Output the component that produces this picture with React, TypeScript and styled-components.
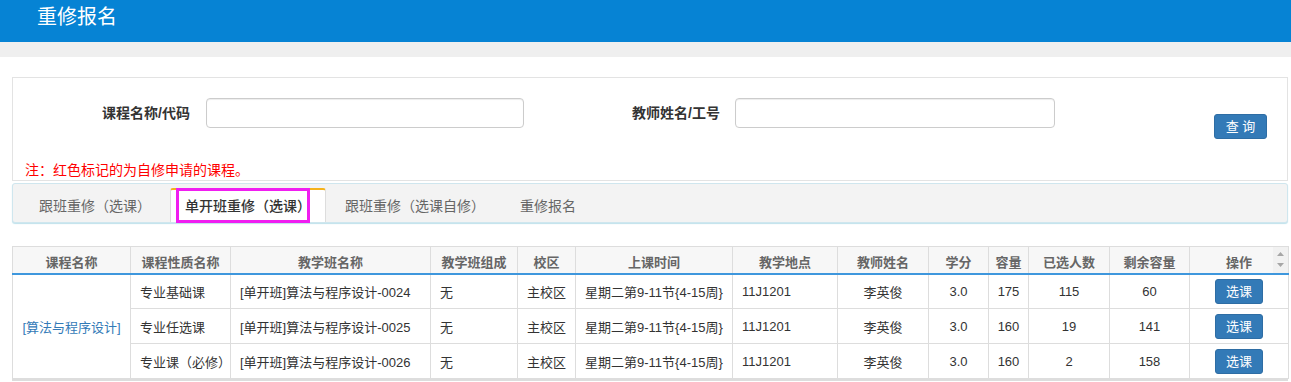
import React from "react";
import styled, { createGlobalStyle } from "styled-components";

const GlobalStyle = createGlobalStyle`
  html, body { margin: 0; padding: 0; background: #fff; }
  body {
    font-family: "Liberation Sans", "Noto Sans CJK SC", sans-serif;
    color: #333;
  }
  * { box-sizing: border-box; }
`;

const Page = styled.div`
  width: 1291px;
`;

const TopBar = styled.header`
  height: 42px;
  background: #0683d4;
  padding-left: 37px;
`;

const Title = styled.h1`
  margin: 0;
  font-size: 20px;
  font-weight: normal;
  color: #fff;
  line-height: 34px;
`;

const Strip = styled.div`
  height: 15px;
  background: #efefef;
`;

const Main = styled.main`
  padding: 20px 3px 0 12px;
`;

const SearchPanel = styled.section`
  height: 104px;
  border: 1px solid #e3e3e3;
  padding-top: 20px;
`;

const FormRow = styled.div`
  display: flex;
  align-items: flex-start;
`;

const FieldLabel = styled.label<{ $w: number; $gap?: number }>`
  width: ${(p) => p.$w}px;
  margin-left: ${(p) => p.$gap ?? 0}px;
  text-align: right;
  font-size: 14px;
  font-weight: bold;
  line-height: 30px;
  color: #333;
  margin-right: 15px;
`;

const TextInput = styled.input<{ $w: number }>`
  width: ${(p) => p.$w}px;
  height: 30px;
  border: 1px solid #ccc;
  border-radius: 4px;
  box-shadow: inset 0 1px 1px rgba(0, 0, 0, 0.075);
  padding: 4px 8px;
  font-size: 13px;
  outline: none;
`;

const QueryButton = styled.button`
  margin: 16px 0 0 159px;
  width: 53px;
  height: 25px;
  padding: 0;
  background: #337ab7;
  border: 1px solid #2e6da4;
  border-radius: 3px;
  color: #fff;
  font-family: "Liberation Sans", "Noto Sans CJK SC", sans-serif;
  font-size: 13px;
  line-height: 23px;
  white-space: pre;
`;

const Note = styled.p`
  margin: 21px 0 0 12px;
  font-size: 14px;
  line-height: 20px;
  color: #ff0000;
`;

const TabBar = styled.nav`
  margin-top: 2px;
  height: 40px;
  border: 1px solid #cfe6ee;
  border-radius: 3px;
  background: #f3f3f3;
  box-shadow: 0 1px 1px #bfe2ec;
  display: flex;
  align-items: flex-end;
  padding-left: 10px;
`;

const Tab = styled.div<{ $active?: boolean }>`
  position: relative;
  height: 34px;
  line-height: 32px;
  font-size: 14px;
  margin-right: 3px;
  white-space: nowrap;
  color: ${(p) => (p.$active ? "#333" : "#666")};
  font-weight: ${(p) => (p.$active ? 500 : 400)};
  background: ${(p) => (p.$active ? "#fff" : "transparent")};
  border-top: 2px solid ${(p) => (p.$active ? "#f5b21a" : "transparent")};
  border-left: ${(p) => (p.$active ? "1px solid #ddd" : "0")};
  border-right: ${(p) => (p.$active ? "1px solid #ddd" : "0")};
  border-radius: 3px 3px 0 0;
  padding: ${(p) => (p.$active ? "0 14px" : "0 16px")};
`;

const Highlight = styled.span`
  position: absolute;
  left: 5px;
  top: -2px;
  width: 134px;
  height: 35px;
  border: 3px solid #f01ef0;
  pointer-events: none;
`;

const GridWrap = styled.div`
  position: relative;
  margin-top: 23px;
  width: 1276px;
  border-bottom: 2px solid #ddd;
`;

const Grid = styled.table`
  width: 1276px;
  table-layout: fixed;
  border-collapse: collapse;
  font-size: 13px;
`;

const Th = styled.th`
  height: 27px;
  padding: 3px 2px 0;
  background: #f7f7f7;
  border: 1px solid #ddd;
  border-bottom: 2px solid #3e97dd;
  color: #666;
  font-weight: 600;
  text-align: center;
  white-space: nowrap;
`;

const Td = styled.td<{ $align?: "left" | "center" }>`
  height: 35px;
  padding: ${(p) => (p.$align === "left" ? "0 0 0 9px" : "0 2px")};
  border: 1px solid #ddd;
  text-align: ${(p) => p.$align ?? "center"};
  color: #333;
  white-space: nowrap;
  overflow: visible;
`;

const CourseLink = styled.a`
  color: #337ab7;
  text-decoration: none;
`;

const PickButton = styled.button`
  width: 48px;
  height: 25px;
  padding: 0;
  background: #337ab7;
  border: 1px solid #2e6da4;
  border-radius: 3px;
  color: #fff;
  font-family: "Liberation Sans", "Noto Sans CJK SC", sans-serif;
  font-size: 13px;
  line-height: 23px;
`;

const ScrollStub = styled.div`
  position: absolute;
  right: 0;
  top: 1px;
  width: 15px;
  height: 26px;
  background: #f1f1f1;
  display: flex;
  flex-direction: column;
  align-items: center;
  justify-content: space-between;
  padding: 5px 0 6px;
`;

const columns: { title: string; w: number }[] = [
  { title: "课程名称", w: 118 },
  { title: "课程性质名称", w: 100 },
  { title: "教学班名称", w: 200 },
  { title: "教学班组成", w: 87 },
  { title: "校区", w: 58 },
  { title: "上课时间", w: 157 },
  { title: "教学地点", w: 105 },
  { title: "教师姓名", w: 91 },
  { title: "学分", w: 60 },
  { title: "容量", w: 40 },
  { title: "已选人数", w: 81 },
  { title: "剩余容量", w: 80 },
  { title: "操作", w: 99 },
];

const rows = [
  { kind: "专业基础课", cls: "[单开班]算法与程序设计-0024", cap: 175, chosen: 115, left: 60 },
  { kind: "专业任选课", cls: "[单开班]算法与程序设计-0025", cap: 160, chosen: 19, left: 141 },
  { kind: "专业课（必修）", cls: "[单开班]算法与程序设计-0026", cap: 160, chosen: 2, left: 158 },
];

const Arrow = ({ up }: { up?: boolean }) => (
  <svg width="7" height="4" viewBox="0 0 7 4">
    <path d={up ? "M0 4 L3.5 0 L7 4 Z" : "M0 0 L3.5 4 L7 0 Z"} fill="#a6a6a6" />
  </svg>
);

export default function App() {
  return (
    <Page>
      <GlobalStyle />
      <TopBar>
        <Title>重修报名</Title>
      </TopBar>
      <Strip />
      <Main>
        <SearchPanel>
          <FormRow>
            <FieldLabel $w={177} style={{ marginRight: 16 }}>课程名称/代码</FieldLabel>
            <TextInput $w={318} />
            <FieldLabel $w={108} $gap={88}>
              教师姓名/工号
            </FieldLabel>
            <TextInput $w={320} />
            <QueryButton>查 询</QueryButton>
          </FormRow>
          <Note>注：红色标记的为自修申请的课程。</Note>
        </SearchPanel>

        <TabBar>
          <Tab>跟班重修（选课）</Tab>
          <Tab $active>
            单开班重修（选课）
            <Highlight />
          </Tab>
          <Tab>跟班重修（选课自修）</Tab>
          <Tab>重修报名</Tab>
        </TabBar>

        <GridWrap>
          <Grid>
            <colgroup>
              {columns.map((c) => (
                <col key={c.title} style={{ width: c.w }} />
              ))}
            </colgroup>
            <thead>
              <tr>
                {columns.map((c) => (
                  <Th key={c.title}>{c.title}</Th>
                ))}
              </tr>
            </thead>
            <tbody>
              {rows.map((r, i) => (
                <tr key={r.cls}>
                  {i === 0 && (
                    <Td rowSpan={3}>
                      <CourseLink href="#">[算法与程序设计]</CourseLink>
                    </Td>
                  )}
                  <Td $align="left">{r.kind}</Td>
                  <Td $align="left">{r.cls}</Td>
                  <Td $align="left">无</Td>
                  <Td>主校区</Td>
                  <Td $align="left">星期二第9-11节{"{"}4-15周{"}"}</Td>
                  <Td $align="left">11J1201</Td>
                  <Td>李英俊</Td>
                  <Td>3.0</Td>
                  <Td>{r.cap}</Td>
                  <Td>{r.chosen}</Td>
                  <Td>{r.left}</Td>
                  <Td>
                    <PickButton>选课</PickButton>
                  </Td>
                </tr>
              ))}
            </tbody>
          </Grid>
          <ScrollStub>
            <Arrow up />
            <Arrow />
          </ScrollStub>
        </GridWrap>
      </Main>
    </Page>
  );
}
